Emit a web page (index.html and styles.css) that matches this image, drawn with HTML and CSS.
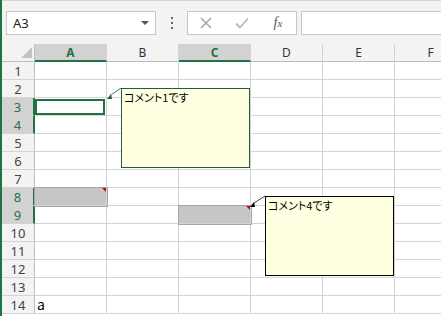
FILE: index.html
```html
<!DOCTYPE html>
<html lang="ja">
<head>
  <meta charset="UTF-8" />
  <title>Sheet</title>
  <link rel="stylesheet" href="styles.css">
</head>
<body>
  <div class="app">
    <div class="bar">
      <div class="namebox"><span>A3</span><i class="caret"></i></div>
      <div class="dots"><i></i><i></i><i></i></div>
      <div class="fxbox">
        <span class="btn">
          <svg width="12" height="12" viewBox="0 0 12 12"><path d="M1 1L11 11M11 1L1 11" stroke="#a8a8a8" stroke-width="1.6" fill="none"/></svg>
        </span>
        <span class="btn">
          <svg width="14" height="12" viewBox="0 0 14 12"><path d="M1 6.5L5 10.5L13 1.5" stroke="#b8b8b8" stroke-width="1.8" fill="none"/></svg>
        </span>
        <span class="btn fx">f<small>x</small></span>
      </div>
      <div class="formula"></div>
    </div>

    <div class="sheet">
      <div class="corner"><svg width="11" height="11" viewBox="0 0 11 11"><path d="M11 0L11 11L0 11Z" fill="#c4c4c4"/></svg></div>
      <div class="ch sel">A</div><div class="ch">B</div><div class="ch sel">C</div><div class="ch">D</div><div class="ch">E</div><div class="ch">F</div>

      <div class="rh">1</div><div class="c"></div><div class="c"></div><div class="c"></div><div class="c"></div><div class="c"></div><div class="c"></div>
      <div class="rh">2</div><div class="c"></div><div class="c"></div><div class="c"></div><div class="c"></div><div class="c"></div><div class="c"></div>
      <div class="rh sel">3</div><div class="c"><div class="cursor"></div></div><div class="c"></div><div class="c"></div><div class="c"></div><div class="c"></div><div class="c"></div>
      <div class="rh sel">4</div><div class="c"></div><div class="c"></div><div class="c"></div><div class="c"></div><div class="c"></div><div class="c"></div>
      <div class="rh">5</div><div class="c"></div><div class="c"></div><div class="c"></div><div class="c"></div><div class="c"></div><div class="c"></div>
      <div class="rh">6</div><div class="c"></div><div class="c"></div><div class="c"></div><div class="c"></div><div class="c"></div><div class="c"></div>
      <div class="rh">7</div><div class="c"></div><div class="c"></div><div class="c"></div><div class="c"></div><div class="c"></div><div class="c"></div>
      <div class="rh sel">8</div><div class="c shade"></div><div class="c"></div><div class="c"></div><div class="c"></div><div class="c"></div><div class="c"></div>
      <div class="rh sel">9</div><div class="c"></div><div class="c"></div><div class="c shade"></div><div class="c"></div><div class="c"></div><div class="c"></div>
      <div class="rh">10</div><div class="c"></div><div class="c"></div><div class="c"></div><div class="c"></div><div class="c"></div><div class="c"></div>
      <div class="rh">11</div><div class="c"></div><div class="c"></div><div class="c"></div><div class="c"></div><div class="c"></div><div class="c"></div>
      <div class="rh">12</div><div class="c"></div><div class="c"></div><div class="c"></div><div class="c"></div><div class="c"></div><div class="c"></div>
      <div class="rh">13</div><div class="c"></div><div class="c"></div><div class="c"></div><div class="c"></div><div class="c"></div><div class="c"></div>
      <div class="rh">14</div><div class="c val">a</div><div class="c"></div><div class="c"></div><div class="c"></div><div class="c"></div><div class="c"></div>

      <svg class="arrows" width="439" height="272" viewBox="0 0 439 272">
        <line x1="119" y1="44" x2="109" y2="51" stroke="#2e7d52" stroke-width="1"/>
        <polygon points="105,55 110,55 109,50" fill="#1e5c3a"/>
        <line x1="263" y1="152" x2="252" y2="159" stroke="#444" stroke-width="1"/>
        <polygon points="248,163 253,163 252,158" fill="#000"/>
      </svg>

      <div class="note note-1">コメント1です</div>
      <div class="note note-4">コメント4です</div>
    </div>
  </div>
</body>
</html>
```

FILE: styles.css
```css
body {
  margin: 0;
  width: 441px;
  height: 316px;
  overflow: hidden;
  background: #fff;
  font-family: 'Noto Sans', sans-serif;
  color: #333;
}
.app {
  height: 316px;
  border-left: 2px solid #217346;
  overflow: hidden;
}
.bar {
  height: 44px;
  box-sizing: border-box;
  border-top: 1px solid #d4d4d4;
  background: #f3f3f3;
  display: flex;
  align-items: flex-start;
  padding: 10px 0 0 4px;
}
.namebox {
  width: 150px;
  height: 24px;
  box-sizing: border-box;
  border: 1px solid #c6c6c6;
  background: #fff;
  display: flex;
  align-items: center;
  justify-content: space-between;
  padding: 0 6px 0 6px;
  font-size: 13px;
  color: #222;
}
.caret {
  width: 0;
  height: 0;
  border-left: 4px solid transparent;
  border-right: 4px solid transparent;
  border-top: 4px solid #555;
}
.dots {
  width: 31px;
  height: 24px;
  display: flex;
  flex-direction: column;
  align-items: center;
  justify-content: center;
  gap: 3px;
}
.dots i {
  width: 2px;
  height: 2px;
  background: #666;
}
.fxbox {
  width: 110px;
  height: 24px;
  box-sizing: border-box;
  border: 1px solid #c6c6c6;
  background: #fff;
  display: flex;
}
.btn {
  width: 36px;
  display: flex;
  align-items: center;
  justify-content: center;
}
.fx {
  font-family: 'Liberation Serif', serif;
  font-style: italic;
  font-size: 14px;
  color: #555;
}
.fx small {
  font-size: 11px;
}
.formula {
  flex: 1;
  margin-left: 4px;
  height: 24px;
  box-sizing: border-box;
  border: 1px solid #c6c6c6;
  border-right: none;
  background: #fff;
}
.sheet {
  position: relative;
  display: grid;
  grid-template-columns: 33px repeat(6, 72px);
  grid-auto-rows: 18px;
}
.corner {
  background: #f3f3f3;
  border-right: 1px solid #bdbdbd;
  border-bottom: 1px solid #bdbdbd;
  display: flex;
  align-items: flex-end;
  justify-content: flex-end;
  padding: 0 2px 3px 0;
  box-sizing: border-box;
}
.ch {
  background: #f3f3f3;
  border-right: 1px solid #d4d4d4;
  border-bottom: 1px solid #bdbdbd;
  text-align: center;
  font-size: 12px;
  line-height: 17px;
  color: #333;
}
.ch.sel {
  background: #d2d2d2;
  color: #217346;
  font-weight: bold;
  border-bottom: 2px solid #217346;
}
.rh {
  background: #f3f3f3;
  border-right: 1px solid #bdbdbd;
  border-bottom: 1px solid #d4d4d4;
  text-align: center;
  font-size: 13px;
  line-height: 18px;
  color: #444;
}
.rh.sel {
  background: #d2d2d2;
  color: #217346;
  border-right: 2px solid #217346;
}
.c {
  border-right: 1px solid #d4d4d4;
  border-bottom: 1px solid #d4d4d4;
}
.cursor {
  width: 70px;
  height: 16px;
  margin-top: 1px;
  box-sizing: border-box;
  border: 2px solid #217346;
}
.shade {
  position: relative;
  background: #c6c6c6;
  outline: 1px solid #a6a6a6;
}
.shade::after {
  content: "";
  position: absolute;
  top: 0;
  right: 0;
  border-left: 4px solid transparent;
  border-top: 4px solid #d00000;
}
.val {
  font-family: 'Noto Sans CJK JP', sans-serif;
  font-size: 14px;
  line-height: 17px;
  padding-left: 2px;
  color: #000;
}
.arrows {
  position: absolute;
  left: 0;
  top: 0;
  pointer-events: none;
}
.note {
  position: absolute;
  width: 129px;
  height: 80px;
  box-sizing: border-box;
  background: #ffffe1;
  padding: 1px 2px;
  font-family: 'Noto Sans CJK JP', sans-serif;
  font-feature-settings: "palt";
  font-size: 11px;
  line-height: 15px;
  color: #000;
}
.note-1 {
  left: 119px;
  top: 44px;
  border: 1px solid #1e5c3a;
}
.note-4 {
  left: 263px;
  top: 152px;
  border: 1px solid #000;
}
```
